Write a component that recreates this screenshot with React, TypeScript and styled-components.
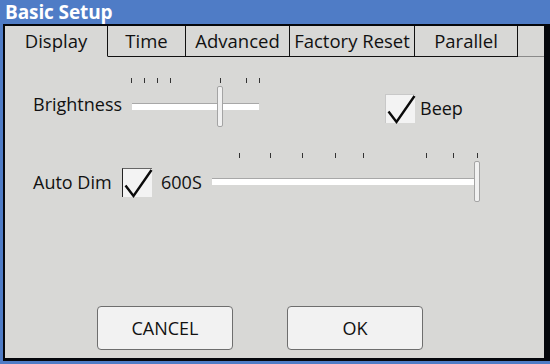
import React from "react";
import styled, { createGlobalStyle } from "styled-components";

const Global = createGlobalStyle`
  html, body { margin: 0; padding: 0; background: #4d7bc5; }
  * { box-sizing: border-box; }
`;

const FONT = `"Open Sans", "Noto Sans", "DejaVu Sans", sans-serif`;

const Window = styled.div`
  width: 550px;
  height: 364px;
  background: #4f7cc6;
  display: flex;
  flex-direction: column;
  padding: 0 0 3px 3px;
  font-family: ${FONT};
  color: #111;
`;

const TitleBar = styled.div`
  height: 24px;
  flex: none;
  display: flex;
  align-items: center;
  padding-left: 2px;
  color: #fff;
  font-weight: 700;
  font-size: 19px;
  letter-spacing: -0.1px;
  line-height: 1;
`;

const Panel = styled.div`
  flex: 1;
  display: flex;
  flex-direction: column;
  background: #d8d8d6;
  border-style: solid;
  border-color: #05070c;
  border-width: 2px 6px 3px 2px;
`;

const TabRow = styled.div`
  display: flex;
  height: 31px;
  flex: none;
`;

const Tab = styled.div<{ $w: number; $active?: boolean }>`
  width: ${(p) => p.$w}px;
  flex: none;
  display: flex;
  align-items: center;
  justify-content: center;
  font-size: 18.5px;
  border-right: 1px solid #111;
  border-bottom: 1px solid ${(p) => (p.$active ? "transparent" : "#111")};
  padding-bottom: 1px;
  white-space: nowrap;
`;

const TabFiller = styled.div`
  flex: 1;
  border-bottom: 1px solid #8a8a8a;
`;

const Content = styled.div`
  flex: 1;
  display: flex;
  flex-direction: column;
  padding: 21px 0 8px 0;
`;

const Row = styled.div<{ $mt?: number }>`
  display: flex;
  align-items: center;
  height: 49px;
  margin-top: ${(p) => p.$mt ?? 0}px;
  padding-left: 28px;
`;

const Label = styled.span<{ $ml?: number; $mt?: number; $w?: number }>`
  font-size: 18px;
  line-height: 1;
  margin-left: ${(p) => p.$ml ?? 0}px;
  margin-top: ${(p) => p.$mt ?? 0}px;
  white-space: nowrap;
  ${(p) => (p.$w ? `width: ${p.$w}px; flex: none;` : "")}
`;

const SliderBox = styled.div<{ $w: number; $ml: number }>`
  position: relative;
  width: ${(p) => p.$w}px;
  height: 49px;
  margin-left: ${(p) => p.$ml}px;
  flex: none;
`;

const Tick = styled.div`
  position: absolute;
  top: 0;
  width: 1px;
  height: 5px;
  background: #333;
`;

const Track = styled.div`
  position: absolute;
  left: 1px;
  right: 2px;
  top: 25px;
  height: 7px;
  background: #ffffff;
  border-top: 1px solid #a8a8a8;
`;

const Thumb = styled.div`
  position: absolute;
  top: 8px;
  width: 6px;
  height: 41px;
  background: #f1f1f1;
  border: 1px solid #a4a4a4;
  border-radius: 2px;
`;

const CheckBox = styled.div<{ $ml: number; $mt?: number; $dark?: boolean }>`
  width: 30px;
  height: 29px;
  flex: none;
  margin-left: ${(p) => p.$ml}px;
  margin-top: ${(p) => p.$mt ?? 0}px;
  background: #f3f3f3;
  border-left: 1px solid ${(p) => (p.$dark ? "#222" : "#c8c8c8")};
  border-top: 1px solid ${(p) => (p.$dark ? "#666" : "#c8c8c8")};
  position: relative;
  svg { position: absolute; left: 0; top: 0; overflow: visible; }
`;

const ButtonRow = styled.div`
  margin-top: auto;
  display: flex;
  gap: 54px;
  padding-left: 92px;
`;

const Button = styled.div`
  width: 136px;
  height: 44px;
  display: flex;
  align-items: center;
  justify-content: center;
  background: #f2f2f2;
  border: 1px solid #6e6e6e;
  border-radius: 4px;
  font-size: 18px;
`;

const Check = () => (
  <svg width="30" height="29" viewBox="0 0 30 29">
    <path d="M2.5 16.5 L10.5 27 L28.5 1" fill="none" stroke="#0a0a0a" strokeWidth="2.4" strokeLinejoin="miter" />
  </svg>
);

type SliderProps = { width: number; ml: number; ticks: number[]; thumb: number };
const Slider = ({ width, ml, ticks, thumb }: SliderProps) => (
  <SliderBox $w={width} $ml={ml}>
    {ticks.map((t, i) => (
      <Tick key={i} style={{ left: t }} />
    ))}
    <Track />
    <Thumb style={{ left: thumb }} />
  </SliderBox>
);

export default function App() {
  return (
    <>
      <Global />
      <Window>
        <TitleBar>Basic Setup</TitleBar>
        <Panel>
          <TabRow>
            <Tab $w={103} $active>Display</Tab>
            <Tab $w={78}>Time</Tab>
            <Tab $w={104}>Advanced</Tab>
            <Tab $w={125}>Factory Reset</Tab>
            <Tab $w={103}>Parallel</Tab>
            <TabFiller />
          </TabRow>
          <Content>
            <Row>
              <Label $mt={2} $w={98}>Brightness</Label>
              <Slider width={130} ml={0} ticks={[0, 13, 26, 39, 89, 115, 128]} thumb={86} />
              <CheckBox $ml={124} $mt={12}>
                <Check />
              </CheckBox>
              <Label $ml={5} $mt={10}>Beep</Label>
            </Row>
            <Row $mt={26}>
              <Label $mt={8} $w={89}>Auto Dim</Label>
              <CheckBox $ml={0} $mt={10} $dark>
                <Check />
              </CheckBox>
              <Label $ml={9} $mt={9} $w={50}>600S</Label>
              <Slider width={269} ml={0} ticks={[28, 59, 91, 124, 152, 215, 242, 266]} thumb={263} />
            </Row>
            <ButtonRow>
              <Button>CANCEL</Button>
              <Button>OK</Button>
            </ButtonRow>
          </Content>
        </Panel>
      </Window>
    </>
  );
}
